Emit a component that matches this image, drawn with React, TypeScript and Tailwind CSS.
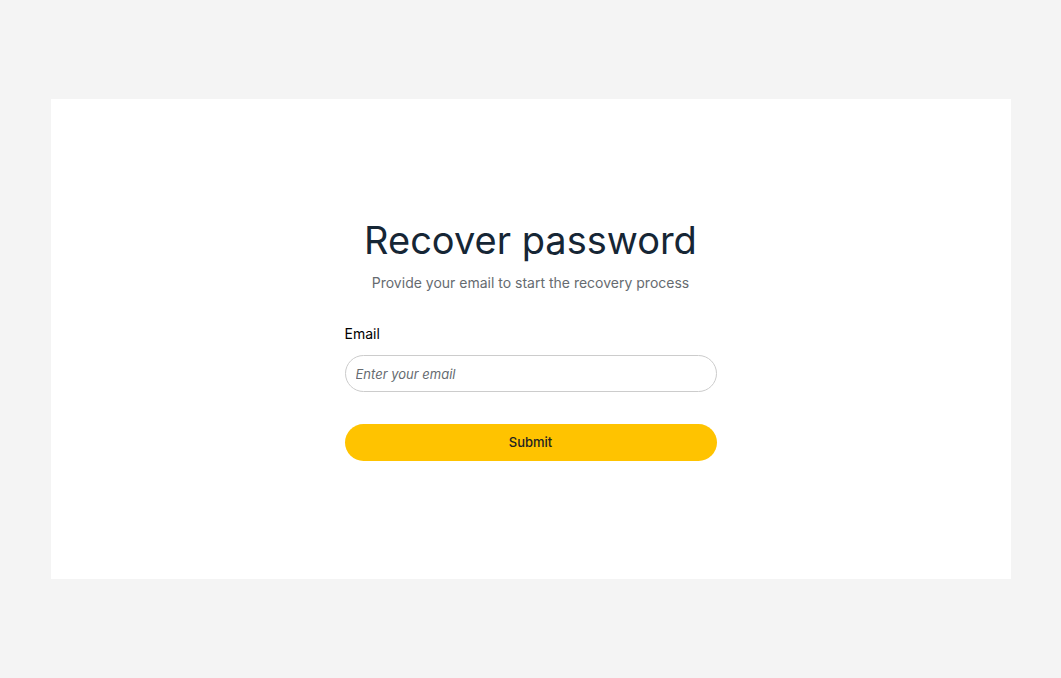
export default function App() {
  return (
    <div className="flex min-h-screen items-center justify-center bg-[#f4f4f4] font-['Inter',sans-serif]">
      <div className="flex h-[480px] w-[960px] justify-center bg-white pt-[117px]">
        <div className="flex w-[372px] flex-col">
          <h1 className="text-center text-[38px] font-normal leading-[48px] text-[#162635]">Recover password</h1>
          <p className="mt-[8px] text-center text-[14px] text-[#666b70]">Provide your email to start the recovery process</p>

          <label className="mt-[30px] text-[14px] text-black">Email</label>
          <input
            type="email"
            placeholder="Enter your email"
            className="mt-[11px] h-[37px] w-full rounded-full border border-[#cccccc] px-[10px] text-[13px] italic outline-none placeholder:text-[#666b70]"
          />

          <button className="mt-[32px] h-[37px] w-full rounded-full bg-[#ffc300] text-[13px] font-medium text-[#222]">
            Submit
          </button>
        </div>
      </div>
    </div>
  )
}
